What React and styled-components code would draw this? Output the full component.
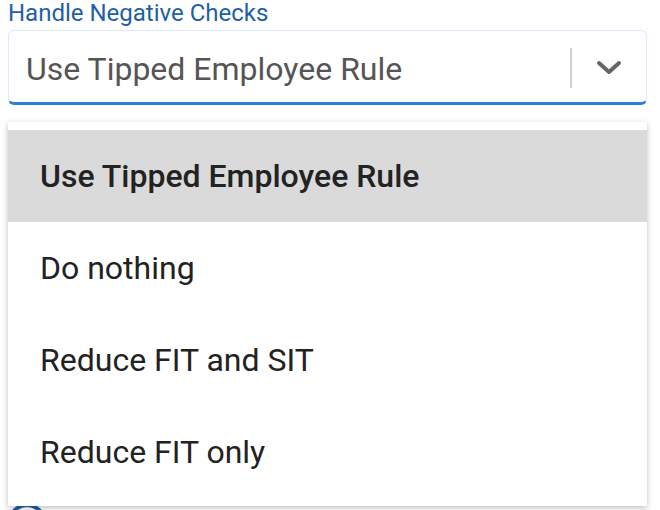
import { createGlobalStyle, styled } from "styled-components";

const GlobalStyle = createGlobalStyle`
  body {
    margin: 0;
    background: #fff;
    font-family: Roboto, "Liberation Sans", sans-serif;
  }
`;

const Page = styled.div`
  position: relative;
  width: 660px;
  height: 510px;
  overflow: hidden;
  padding: 0 13px 0 8px;
  box-sizing: border-box;
`;

const Label = styled.div`
  color: #1f5fa6;
  font-size: 24px;
  line-height: 28px;
  margin-top: -1px;
`;

const SelectBox = styled.div`
  margin-top: 3px;
  height: 75px;
  box-sizing: border-box;
  display: flex;
  align-items: center;
  border: 1px solid #d9e9fb;
  border-bottom: 3px solid #2b7fd9;
  border-radius: 6px;
  padding-left: 17px;
`;

const Value = styled.div`
  flex: 1;
  padding-top: 4px;
  font-size: 32px;
  color: #555;
`;

const Divider = styled.div`
  width: 2px;
  height: 40px;
  margin-top: 2px;
  background: #cfcfcf;
`;

const Chevron = styled.div`
  width: 74px;
  display: flex;
  justify-content: center;
  padding-top: 2px;
  color: #666;
`;

const Behind = styled.div`
  display: flex;
  align-items: center;
  gap: 30px;
  margin-top: 398px;
  font-size: 32px;
  color: #333;
`;

const HelpIcon = styled.div`
  width: 30px;
  height: 30px;
  border: 4px solid #1f5fa6;
  border-radius: 50%;
`;

const Menu = styled.div`
  position: absolute;
  left: 8px;
  top: 122px;
  width: 639px;
  padding: 8px 0;
  background: #fff;
  box-shadow: 0 2px 6px rgba(0, 0, 0, 0.25);
`;

const Option = styled.div`
  height: 92px;
  display: flex;
  align-items: center;
  padding-left: 32px;
  font-size: 32px;
  color: #222;
  font-weight: ${(p) => (p.$selected ? 500 : 400)};
  background: ${(p) => (p.$selected ? "#dadada" : "#fff")};
`;

const options = [
  "Use Tipped Employee Rule",
  "Do nothing",
  "Reduce FIT and SIT",
  "Reduce FIT only",
];

export default function App() {
  const selected = options[0];
  return (
    <Page>
      <GlobalStyle />
      <Label>Handle Negative Checks</Label>
      <SelectBox>
        <Value>{selected}</Value>
        <Divider />
        <Chevron>
          <svg width="26" height="16" viewBox="0 0 26 16">
            <path
              d="M3 3 L13 12 L23 3"
              fill="none"
              stroke="currentColor"
              strokeWidth="4"
              strokeLinecap="round"
              strokeLinejoin="round"
            />
          </svg>
        </Chevron>
      </SelectBox>
      <Behind>
        <HelpIcon />
        <span>No</span>
        <span>Yes</span>
      </Behind>
      <Menu>
        {options.map((o) => (
          <Option key={o} $selected={o === selected}>
            {o}
          </Option>
        ))}
      </Menu>
    </Page>
  );
}
